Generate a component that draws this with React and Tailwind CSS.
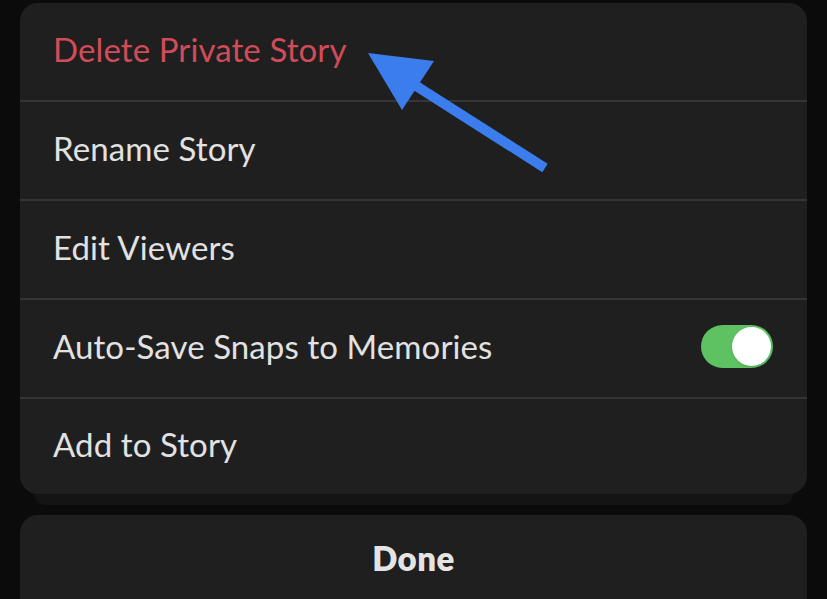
import React from 'react'

const rows = [
  { label: 'Delete Private Story', danger: true },
  { label: 'Rename Story' },
  { label: 'Edit Viewers' },
  { label: 'Auto-Save Snaps to Memories', toggle: true },
  { label: 'Add to Story' },
]

function Toggle() {
  return (
    <div className="w-[72px] h-[43px] rounded-full bg-[#5ec262] flex items-center justify-end pr-[2px]">
      <div className="w-[39px] h-[39px] rounded-full bg-white shadow" />
    </div>
  )
}

function Arrow() {
  return (
    <svg className="absolute left-0 top-0 pointer-events-none" width="827" height="599" viewBox="0 0 827 599">
      <line x1="545" y1="168" x2="410" y2="82" stroke="#3b7ded" strokeWidth="10" />
      <polygon points="368,53 434,61 402,110" fill="#3b7ded" />
    </svg>
  )
}

export default function App() {
  return (
    <div className="relative h-[599px] w-[827px] overflow-hidden bg-[#0b0b0b] px-[20px] pt-[3px]" style={{ fontFamily: 'Lato, "Noto Sans", sans-serif' }}>
      <div className="rounded-[18px] bg-[#1f1f1f] overflow-hidden">
        {rows.map((r, i) => (
          <div
            key={i}
            className={`flex items-center justify-between pl-[33px] pr-[34px] pb-[4px] ${i < rows.length - 1 ? 'h-[99px] border-b-2 border-[#353535]' : 'h-[95px]'}`}
          >
            <span className={`text-[33px] tracking-[0.1px] ${r.danger ? 'text-[#d24b58]' : 'text-[#e2e2e2]'}`}>{r.label}</span>
            {r.toggle && <Toggle />}
          </div>
        ))}
      </div>
      <div className="mx-[14px] h-[11px] rounded-b-[18px] bg-[#141414]" />
      <div className="mt-[10px] h-[100px] rounded-[18px] bg-[#1f1f1f] flex items-start justify-center pt-[19px]">
        <span className="text-[33px] font-extrabold text-[#e4e4e4] tracking-[0.5px]">Done</span>
      </div>
      <Arrow />
    </div>
  )
}
